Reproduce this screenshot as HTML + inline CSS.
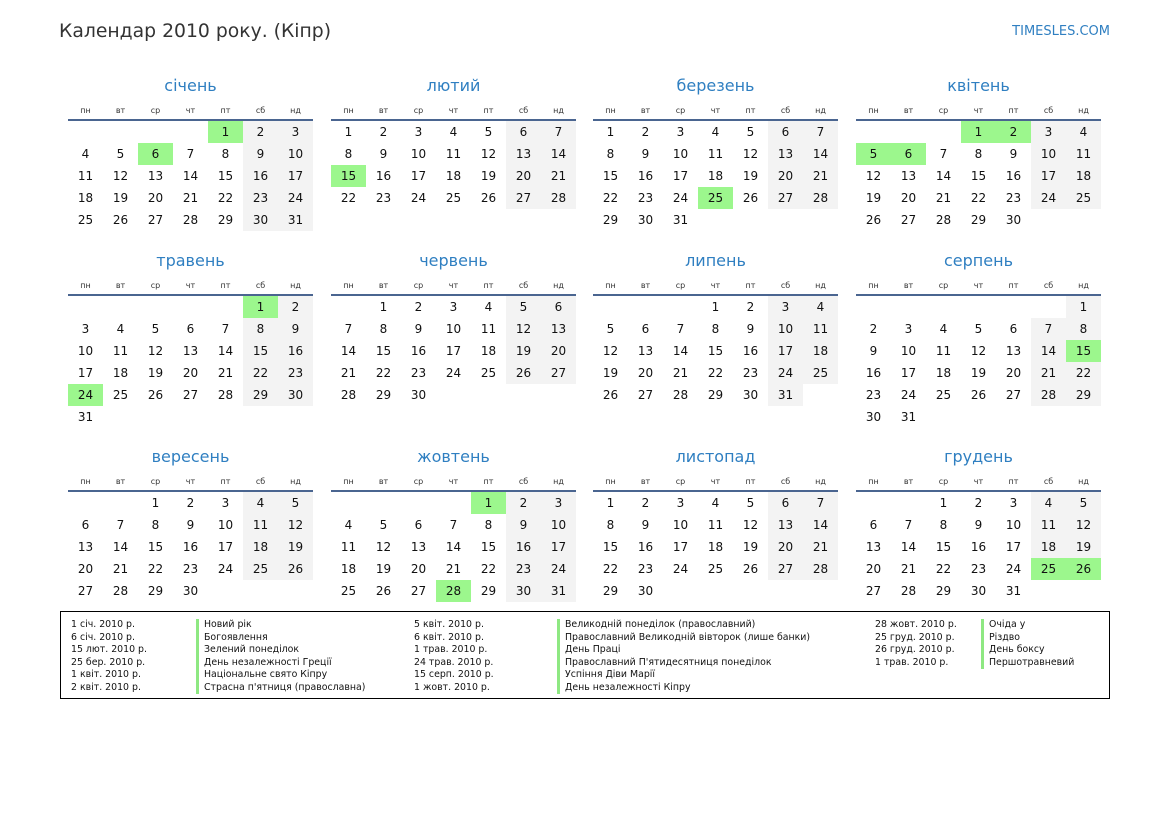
<!DOCTYPE html>
<html><head><meta charset="utf-8"><style>
body{margin:0;width:1169px;height:827px;background:#fff;font-family:"DejaVu Sans","Liberation Sans",sans-serif;position:relative;overflow:hidden}
.t{position:absolute;left:59px;top:21px;font-size:18.8px;color:#333}
.s{position:absolute;right:59px;top:24px;font-size:13px;color:#2f7fc1}
.m{position:absolute;width:245px}
.m h2{margin:0;height:31px;line-height:31px;text-align:center;font-weight:normal;font-size:16px;color:#2f7fc1}
.hd{display:flex;height:18px;border-bottom:2px solid #4a6590;font-size:8px;color:#333}
.hd span{width:35px;text-align:center;line-height:20px}
table{border-collapse:collapse;table-layout:fixed;width:245px}
td{width:35px;height:22px;padding:0;text-align:center;font-size:12px;color:#111}
td:nth-child(6),td:nth-child(7){background:#f3f3f3}
td:empty{background:none!important}
td.h{background:#9cf78d!important}
.lg{position:absolute;left:60px;top:611px;width:1048px;height:86px;border:1px solid #000;font-size:9.4px;color:#111}
.lg>div{position:absolute;top:7px;line-height:12.5px;white-space:pre}
.b{border-left:3px solid #8ee882;padding-left:5px;margin-bottom:0}
</style></head><body>
<div class="t">Календар 2010 року. (Кіпр)</div>
<div class="s">TIMESLES.COM</div>

<div class="m" style="left:68px;top:70px"><h2>січень</h2><div class="hd"><span>пн</span><span>вт</span><span>ср</span><span>чт</span><span>пт</span><span>сб</span><span>нд</span></div><table>
<tr><td></td><td></td><td></td><td></td><td class="h">1</td><td>2</td><td>3</td></tr>
<tr><td>4</td><td>5</td><td class="h">6</td><td>7</td><td>8</td><td>9</td><td>10</td></tr>
<tr><td>11</td><td>12</td><td>13</td><td>14</td><td>15</td><td>16</td><td>17</td></tr>
<tr><td>18</td><td>19</td><td>20</td><td>21</td><td>22</td><td>23</td><td>24</td></tr>
<tr><td>25</td><td>26</td><td>27</td><td>28</td><td>29</td><td>30</td><td>31</td></tr></table></div>

<div class="m" style="left:331px;top:70px"><h2>лютий</h2><div class="hd"><span>пн</span><span>вт</span><span>ср</span><span>чт</span><span>пт</span><span>сб</span><span>нд</span></div><table>
<tr><td>1</td><td>2</td><td>3</td><td>4</td><td>5</td><td>6</td><td>7</td></tr>
<tr><td>8</td><td>9</td><td>10</td><td>11</td><td>12</td><td>13</td><td>14</td></tr>
<tr><td class="h">15</td><td>16</td><td>17</td><td>18</td><td>19</td><td>20</td><td>21</td></tr>
<tr><td>22</td><td>23</td><td>24</td><td>25</td><td>26</td><td>27</td><td>28</td></tr></table></div>

<div class="m" style="left:593px;top:70px"><h2>березень</h2><div class="hd"><span>пн</span><span>вт</span><span>ср</span><span>чт</span><span>пт</span><span>сб</span><span>нд</span></div><table>
<tr><td>1</td><td>2</td><td>3</td><td>4</td><td>5</td><td>6</td><td>7</td></tr>
<tr><td>8</td><td>9</td><td>10</td><td>11</td><td>12</td><td>13</td><td>14</td></tr>
<tr><td>15</td><td>16</td><td>17</td><td>18</td><td>19</td><td>20</td><td>21</td></tr>
<tr><td>22</td><td>23</td><td>24</td><td class="h">25</td><td>26</td><td>27</td><td>28</td></tr>
<tr><td>29</td><td>30</td><td>31</td><td></td><td></td><td></td><td></td></tr></table></div>

<div class="m" style="left:856px;top:70px"><h2>квітень</h2><div class="hd"><span>пн</span><span>вт</span><span>ср</span><span>чт</span><span>пт</span><span>сб</span><span>нд</span></div><table>
<tr><td></td><td></td><td></td><td class="h">1</td><td class="h">2</td><td>3</td><td>4</td></tr>
<tr><td class="h">5</td><td class="h">6</td><td>7</td><td>8</td><td>9</td><td>10</td><td>11</td></tr>
<tr><td>12</td><td>13</td><td>14</td><td>15</td><td>16</td><td>17</td><td>18</td></tr>
<tr><td>19</td><td>20</td><td>21</td><td>22</td><td>23</td><td>24</td><td>25</td></tr>
<tr><td>26</td><td>27</td><td>28</td><td>29</td><td>30</td><td></td><td></td></tr></table></div>

<div class="m" style="left:68px;top:245px"><h2>травень</h2><div class="hd"><span>пн</span><span>вт</span><span>ср</span><span>чт</span><span>пт</span><span>сб</span><span>нд</span></div><table>
<tr><td></td><td></td><td></td><td></td><td></td><td class="h">1</td><td>2</td></tr>
<tr><td>3</td><td>4</td><td>5</td><td>6</td><td>7</td><td>8</td><td>9</td></tr>
<tr><td>10</td><td>11</td><td>12</td><td>13</td><td>14</td><td>15</td><td>16</td></tr>
<tr><td>17</td><td>18</td><td>19</td><td>20</td><td>21</td><td>22</td><td>23</td></tr>
<tr><td class="h">24</td><td>25</td><td>26</td><td>27</td><td>28</td><td>29</td><td>30</td></tr>
<tr><td>31</td><td></td><td></td><td></td><td></td><td></td><td></td></tr></table></div>

<div class="m" style="left:331px;top:245px"><h2>червень</h2><div class="hd"><span>пн</span><span>вт</span><span>ср</span><span>чт</span><span>пт</span><span>сб</span><span>нд</span></div><table>
<tr><td></td><td>1</td><td>2</td><td>3</td><td>4</td><td>5</td><td>6</td></tr>
<tr><td>7</td><td>8</td><td>9</td><td>10</td><td>11</td><td>12</td><td>13</td></tr>
<tr><td>14</td><td>15</td><td>16</td><td>17</td><td>18</td><td>19</td><td>20</td></tr>
<tr><td>21</td><td>22</td><td>23</td><td>24</td><td>25</td><td>26</td><td>27</td></tr>
<tr><td>28</td><td>29</td><td>30</td><td></td><td></td><td></td><td></td></tr></table></div>

<div class="m" style="left:593px;top:245px"><h2>липень</h2><div class="hd"><span>пн</span><span>вт</span><span>ср</span><span>чт</span><span>пт</span><span>сб</span><span>нд</span></div><table>
<tr><td></td><td></td><td></td><td>1</td><td>2</td><td>3</td><td>4</td></tr>
<tr><td>5</td><td>6</td><td>7</td><td>8</td><td>9</td><td>10</td><td>11</td></tr>
<tr><td>12</td><td>13</td><td>14</td><td>15</td><td>16</td><td>17</td><td>18</td></tr>
<tr><td>19</td><td>20</td><td>21</td><td>22</td><td>23</td><td>24</td><td>25</td></tr>
<tr><td>26</td><td>27</td><td>28</td><td>29</td><td>30</td><td>31</td><td></td></tr></table></div>

<div class="m" style="left:856px;top:245px"><h2>серпень</h2><div class="hd"><span>пн</span><span>вт</span><span>ср</span><span>чт</span><span>пт</span><span>сб</span><span>нд</span></div><table>
<tr><td></td><td></td><td></td><td></td><td></td><td></td><td>1</td></tr>
<tr><td>2</td><td>3</td><td>4</td><td>5</td><td>6</td><td>7</td><td>8</td></tr>
<tr><td>9</td><td>10</td><td>11</td><td>12</td><td>13</td><td>14</td><td class="h">15</td></tr>
<tr><td>16</td><td>17</td><td>18</td><td>19</td><td>20</td><td>21</td><td>22</td></tr>
<tr><td>23</td><td>24</td><td>25</td><td>26</td><td>27</td><td>28</td><td>29</td></tr>
<tr><td>30</td><td>31</td><td></td><td></td><td></td><td></td><td></td></tr></table></div>

<div class="m" style="left:68px;top:441px"><h2>вересень</h2><div class="hd"><span>пн</span><span>вт</span><span>ср</span><span>чт</span><span>пт</span><span>сб</span><span>нд</span></div><table>
<tr><td></td><td></td><td>1</td><td>2</td><td>3</td><td>4</td><td>5</td></tr>
<tr><td>6</td><td>7</td><td>8</td><td>9</td><td>10</td><td>11</td><td>12</td></tr>
<tr><td>13</td><td>14</td><td>15</td><td>16</td><td>17</td><td>18</td><td>19</td></tr>
<tr><td>20</td><td>21</td><td>22</td><td>23</td><td>24</td><td>25</td><td>26</td></tr>
<tr><td>27</td><td>28</td><td>29</td><td>30</td><td></td><td></td><td></td></tr></table></div>

<div class="m" style="left:331px;top:441px"><h2>жовтень</h2><div class="hd"><span>пн</span><span>вт</span><span>ср</span><span>чт</span><span>пт</span><span>сб</span><span>нд</span></div><table>
<tr><td></td><td></td><td></td><td></td><td class="h">1</td><td>2</td><td>3</td></tr>
<tr><td>4</td><td>5</td><td>6</td><td>7</td><td>8</td><td>9</td><td>10</td></tr>
<tr><td>11</td><td>12</td><td>13</td><td>14</td><td>15</td><td>16</td><td>17</td></tr>
<tr><td>18</td><td>19</td><td>20</td><td>21</td><td>22</td><td>23</td><td>24</td></tr>
<tr><td>25</td><td>26</td><td>27</td><td class="h">28</td><td>29</td><td>30</td><td>31</td></tr></table></div>

<div class="m" style="left:593px;top:441px"><h2>листопад</h2><div class="hd"><span>пн</span><span>вт</span><span>ср</span><span>чт</span><span>пт</span><span>сб</span><span>нд</span></div><table>
<tr><td>1</td><td>2</td><td>3</td><td>4</td><td>5</td><td>6</td><td>7</td></tr>
<tr><td>8</td><td>9</td><td>10</td><td>11</td><td>12</td><td>13</td><td>14</td></tr>
<tr><td>15</td><td>16</td><td>17</td><td>18</td><td>19</td><td>20</td><td>21</td></tr>
<tr><td>22</td><td>23</td><td>24</td><td>25</td><td>26</td><td>27</td><td>28</td></tr>
<tr><td>29</td><td>30</td><td></td><td></td><td></td><td></td><td></td></tr></table></div>

<div class="m" style="left:856px;top:441px"><h2>грудень</h2><div class="hd"><span>пн</span><span>вт</span><span>ср</span><span>чт</span><span>пт</span><span>сб</span><span>нд</span></div><table>
<tr><td></td><td></td><td>1</td><td>2</td><td>3</td><td>4</td><td>5</td></tr>
<tr><td>6</td><td>7</td><td>8</td><td>9</td><td>10</td><td>11</td><td>12</td></tr>
<tr><td>13</td><td>14</td><td>15</td><td>16</td><td>17</td><td>18</td><td>19</td></tr>
<tr><td>20</td><td>21</td><td>22</td><td>23</td><td>24</td><td class="h">25</td><td class="h">26</td></tr>
<tr><td>27</td><td>28</td><td>29</td><td>30</td><td>31</td><td></td><td></td></tr></table></div>

<div class="lg">
<div style="left:10px">1 січ. 2010 р.
6 січ. 2010 р.
15 лют. 2010 р.
25 бер. 2010 р.
1 квіт. 2010 р.
2 квіт. 2010 р.</div>
<div style="left:135px"><div class="b">Новий рік</div><div class="b">Богоявлення</div><div class="b">Зелений понеділок</div><div class="b">День незалежності Греції</div><div class="b">Національне свято Кіпру</div><div class="b">Страсна п'ятниця (православна)</div></div>
<div style="left:353px">5 квіт. 2010 р.
6 квіт. 2010 р.
1 трав. 2010 р.
24 трав. 2010 р.
15 серп. 2010 р.
1 жовт. 2010 р.</div>
<div style="left:496px"><div class="b">Великодній понеділок (православний)</div><div class="b">Православний Великодній вівторок (лише банки)</div><div class="b">День Праці</div><div class="b">Православний П'ятидесятниця понеділок</div><div class="b">Успіння Діви Марії</div><div class="b">День незалежності Кіпру</div></div>
<div style="left:814px">28 жовт. 2010 р.
25 груд. 2010 р.
26 груд. 2010 р.
1 трав. 2010 р.</div>
<div style="left:920px"><div class="b">Очіда у</div><div class="b">Різдво</div><div class="b">День боксу</div><div class="b">Першотравневий</div></div>
</div>
</body></html>
